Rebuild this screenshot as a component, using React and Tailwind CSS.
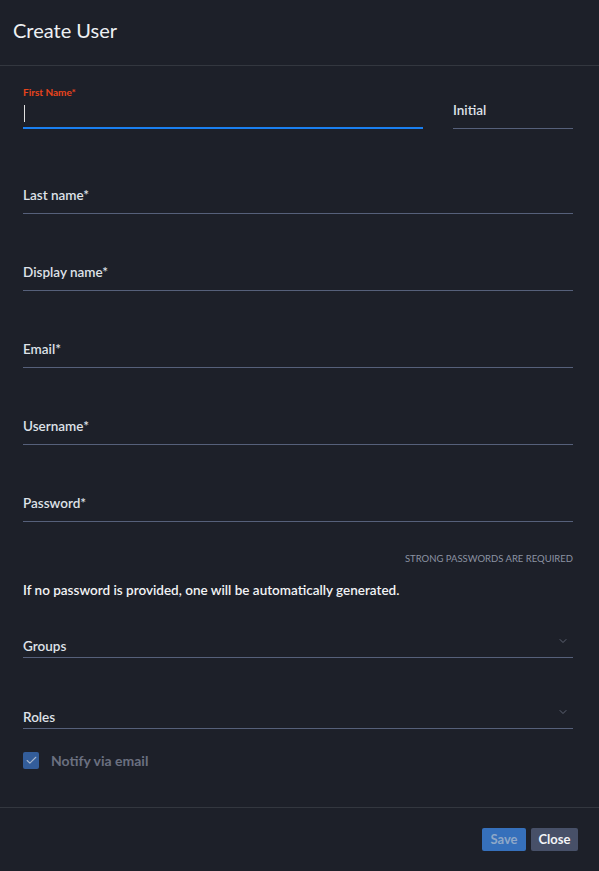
import { ChevronDown, Check } from 'lucide-react'

const fields = ['Last name*', 'Display name*', 'Email*', 'Username*', 'Password*']

function Field({ label, first }) {
  return (
    <div className={`${first ? 'h-[85px]' : 'h-[77px]'} flex flex-col justify-end`}>
      <div className="border-b border-[#56607a] pb-[9px] text-[13.5px] font-semibold text-[#dfe2e8] leading-[18px]">
        {label}
      </div>
    </div>
  )
}

function Select({ label, className }) {
  return (
    <div className={`flex items-end border-b border-[#56607a] pb-[2px] ${className}`}>
      <span className="flex-1 text-[13.5px] font-semibold text-[#dfe2e8] leading-[18px]">{label}</span>
      <ChevronDown className="w-[12px] h-[12px] text-[#666c7c] mb-[8px] mr-[4px]" strokeWidth={1.75} />
    </div>
  )
}

export default function App() {
  return (
    <div className="w-[599px] h-[871px] bg-[#1d2029] flex flex-col" style={{ fontFamily: 'Lato, "Noto Sans", sans-serif' }}>
      <header className="h-[66px] border-b border-[#33373f] px-[13px] flex items-center">
        <h1 className="text-[20px] text-[#eef0f3] font-normal pb-[5px]">Create User</h1>
      </header>

      <div className="pl-[23px] pr-[26px] pt-[20px] flex-1 flex flex-col">
        <div className="flex gap-[30px] items-end">
          <div className="flex-1">
            <div className="text-[10px] font-bold text-[#e8441c] leading-[12px]">First Name*</div>
            <div className="h-[23px] flex items-center mt-[4px] mb-[2px]">
              <span className="w-px h-[17px] bg-[#e0e0e0] ml-[1px]" />
            </div>
            <div className="h-[2px] bg-[#1a7ff0]" />
          </div>
          <div className="w-[120px] border-b border-[#56607a] pb-[9px] text-[13.5px] font-semibold text-[#dfe2e8] leading-[18px]">
            Initial
          </div>
        </div>

        {fields.map((f, i) => (
          <Field key={f} label={f} first={i === 0} />
        ))}

        <div className="text-right text-[9.5px] uppercase text-[#8c93a3] mt-[31px] leading-[12px]">
          Strong passwords are required
        </div>
        <p className="text-[13.5px] font-semibold text-[#f2f3f5] mt-[16px] leading-[18px]">
          If no password is provided, one will be automatically generated.
        </p>

        <Select label="Groups" className="mt-[36px]" />
        <Select label="Roles" className="mt-[48px]" />

        <label className="flex items-center gap-[12px] mt-[21px]">
          <span className="w-[16px] h-[17px] rounded-[2px] bg-[#335d9a] flex items-center justify-center">
            <Check className="w-[13px] h-[13px] text-[#a7b6cc]" strokeWidth={2} />
          </span>
          <span className="text-[14px] font-bold text-[#6b7080]">Notify via email</span>
        </label>
      </div>

      <footer className="h-[64px] border-t border-[#33373f] flex items-start justify-end gap-[5px] pt-[20px] pr-[21px]">
        <button className="w-[44px] h-[23px] rounded-[2px] bg-[#3670bb] text-[13px] font-bold text-[#8fa8c8]">Save</button>
        <button className="w-[47px] h-[23px] rounded-[2px] bg-[#475068] text-[13px] font-bold text-[#f4f5f7]">Close</button>
      </footer>
    </div>
  )
}
